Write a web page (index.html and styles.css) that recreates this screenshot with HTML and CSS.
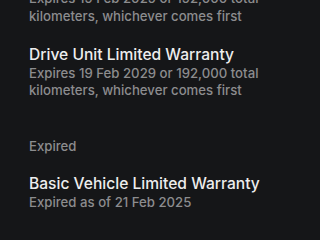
FILE: index.html
```html
<!DOCTYPE html>
<html>
<head>
<meta charset="utf-8">
<link rel="stylesheet" href="styles.css">
</head>
<body>
<div class="list">
  <section class="section">
    <div class="item item-cut">
      <div class="sub">Expires 19 Feb 2029 or 192,000 total<br>kilometers, whichever comes first</div>
    </div>
    <div class="item">
      <div class="title">Drive Unit Limited Warranty</div>
      <div class="sub">Expires 19 Feb 2029 or 192,000 total<br>kilometers, whichever comes first</div>
    </div>
  </section>
  <section class="section">
    <div class="header">Expired</div>
    <div class="item">
      <div class="title">Basic Vehicle Limited Warranty</div>
      <div class="sub">Expired as of 21 Feb 2025</div>
    </div>
  </section>
</div>
</body>
</html>
```

FILE: styles.css
```css
html, body {
  margin: 0;
  padding: 0;
  background: #151618;
  width: 320px;
  height: 240px;
  overflow: hidden;
}
.list {
  margin-top: -9.9px;
  padding-left: 29px;
  display: flex;
  flex-direction: column;
  gap: 38px;
  font-family: Inter, "Noto Sans", sans-serif;
}
.section {
  display: flex;
  flex-direction: column;
  gap: 20px;
}
.title {
  font-size: 15.6px;
  line-height: 20px;
  color: #ededed;
  font-weight: 500;
}
.sub {
  font-size: 13.2px;
  line-height: 17.4px;
  color: #8c8c8e;
  font-weight: 500;
}
.header {
  font-size: 13.2px;
  line-height: 16px;
  color: #8c8c8e;
  font-weight: 500;
}
```
